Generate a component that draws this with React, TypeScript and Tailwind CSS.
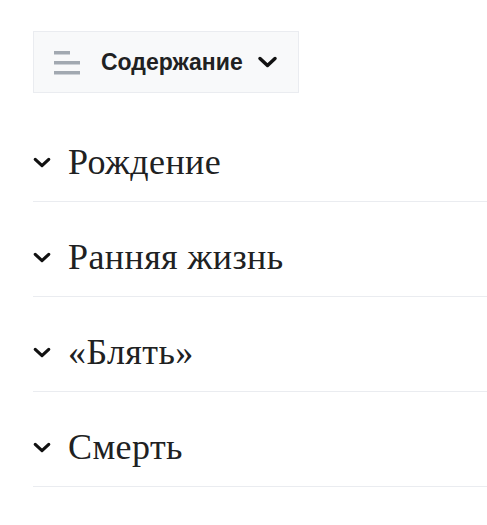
const sections = ["Рождение", "Ранняя жизнь", "«Блять»", "Смерть"];

function Chevron({ className }: { className?: string }) {
  return (
    <svg viewBox="0 0 20 12" className={className} fill="none">
      <path
        d="M2.5 2.5l7.5 7 7.5-7"
        stroke="currentColor"
        strokeWidth="3.5"
        strokeLinecap="round"
        strokeLinejoin="round"
      />
    </svg>
  );
}

function ListIcon() {
  return (
    <svg viewBox="0 0 26 26" className="w-[26px] h-[26px]" fill="#a2a9b1">
      <rect x="0" y="2" width="16" height="3.5" />
      <rect x="0" y="12" width="26" height="3.5" />
      <rect x="0" y="22" width="26" height="3.5" />
    </svg>
  );
}

export default function App() {
  return (
    <div className="w-[487px] h-[525px] bg-white pt-[31px] pl-[33px] overflow-hidden">
      <button className="flex items-center w-[266px] h-[62px] bg-[#f8f9fa] border border-[#eaecf0] pl-[20px] text-[#202122]">
        <ListIcon />
        <span className="ml-[21px] text-[23px] font-bold font-['Liberation_Sans',Arial,sans-serif] leading-none">
          Содержание
        </span>
        <Chevron className="ml-[14px] w-[21px] h-[12px] text-[#111]" />
      </button>
      <div className="mt-[14px]">
        {sections.map((s) => (
          <div
            key={s}
            className="flex items-center pt-[35px] pb-[19px] border-b border-[#eaecf0]"
          >
            <Chevron className="w-[18px] h-[11px] text-[#111] mr-[17px]" />
            <h2 className="text-[36px] leading-[40px] tracking-[0.4px] text-[#202122] font-['Liberation_Serif','Times_New_Roman',serif]">
              {s}
            </h2>
          </div>
        ))}
      </div>
    </div>
  );
}
